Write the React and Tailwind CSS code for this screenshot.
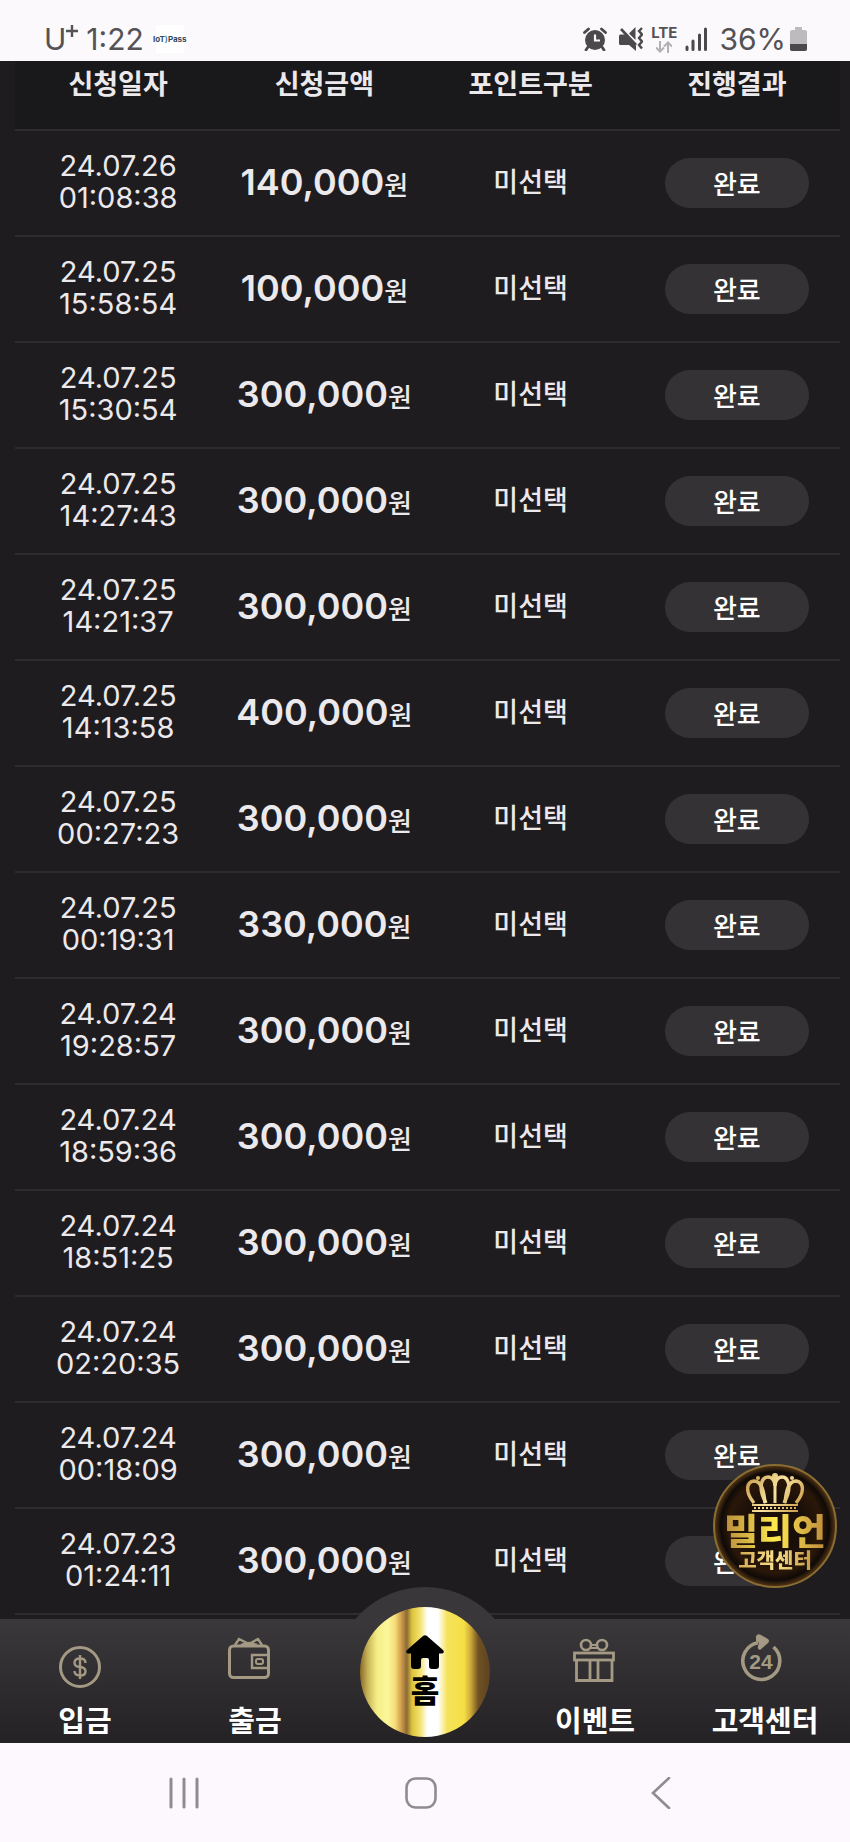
import React from "react";

const rows = [
  { date: "24.07.26", time: "01:08:38", amount: "140,000" },
  { date: "24.07.25", time: "15:58:54", amount: "100,000" },
  { date: "24.07.25", time: "15:30:54", amount: "300,000" },
  { date: "24.07.25", time: "14:27:43", amount: "300,000" },
  { date: "24.07.25", time: "14:21:37", amount: "300,000" },
  { date: "24.07.25", time: "14:13:58", amount: "400,000" },
  { date: "24.07.25", time: "00:27:23", amount: "300,000" },
  { date: "24.07.25", time: "00:19:31", amount: "330,000" },
  { date: "24.07.24", time: "19:28:57", amount: "300,000" },
  { date: "24.07.24", time: "18:59:36", amount: "300,000" },
  { date: "24.07.24", time: "18:51:25", amount: "300,000" },
  { date: "24.07.24", time: "02:20:35", amount: "300,000" },
  { date: "24.07.24", time: "00:18:09", amount: "300,000" },
  { date: "24.07.23", time: "01:24:11", amount: "300,000" },
];

const columns = ["신청일자", "신청금액", "포인트구분", "진행결과"];

function StatusBar() {
  return (
    <header className="flex h-[61px] items-end justify-between bg-[#fbf9fc] pr-[43px] pb-1 pl-11 font-['Inter',sans-serif] text-[30px] leading-9 text-[#545255]">
      <div className="flex items-center">
        <span>U</span>
        <svg className="mb-4 h-3 w-3" viewBox="0 0 12 12" fill="none" stroke="currentColor" strokeWidth="2.4">
          <path d="M6 0v12M0 6h12" />
        </svg>
        <span className="ml-2">1:22</span>
        <span className="ml-3 flex h-7 w-7 items-center justify-center bg-white text-[8px] font-bold text-[#33475a]">
          IoT<span className="text-[#3f86b0]">)</span>Pass
        </span>
      </div>
      <div className="flex items-center">
        <svg className="h-6 w-6" viewBox="0 0 24 24" fill="none" stroke="#4b494c">
          <circle cx="12" cy="13" r="10" fill="#4b494c" stroke="none" />
          <path d="M1.500 5.500 5.500 2M22.500 5.500 18.500 2M5 20l-2 3M19 20l2 3" strokeWidth="2.800" strokeLinecap="round" />
          <path d="M12 7.500v6h5" stroke="#fbf9fc" strokeWidth="2.200" />
        </svg>
        <svg className="ml-3 h-6 w-6" viewBox="0 0 24 24" fill="none">
          <path d="M0 9q0-1.500 1.500-1.500H6L17 19v5l-7-6H1.500Q0 18 0 16.500z" fill="#4b494c" />
          <path d="M10 6.500 16.500 0v13z" fill="#4b494c" />
          <path d="M2 2l15 16" stroke="#4b494c" strokeWidth="2.600" />
          <path d="M23 1l-3 3 3 3.500-3 3.500 3 3.500-3 3.500 3 3.500" stroke="#4b494c" strokeWidth="2.400" />
        </svg>
        <div className="ml-2 flex flex-col items-center">
          <span className="text-[15px] leading-4 font-bold">LTE</span>
          <svg className="h-3 w-4" viewBox="0 0 16 12" fill="none" stroke="#b3b1b4" strokeWidth="2">
            <path d="M4 0v10M0 6.500l4 4 4-4M12 12V2M8 5.500l4-4 4 4" />
          </svg>
        </div>
        <svg className="ml-2 h-6 w-[22px]" viewBox="0 0 22 24" stroke="#4b494c" strokeWidth="3" strokeLinecap="round">
          <path d="M2 20v2.500M8 14v8.500M14.500 8v14.500M20.500 2v20.500" />
        </svg>
        <span className="ml-3">36%</span>
        <svg className="ml-1 h-6 w-[17px]" viewBox="0 0 17 24">
          <path d="M5 0h7v3h3q2 0 2 2v17q0 2-2 2H2q-2 0-2-2V5q0-2 2-2h3z" fill="#bdbbbe" />
          <path d="M0 17h17v5q0 2-2 2H2q-2 0-2-2z" fill="#4b494c" />
        </svg>
      </div>
    </header>
  );
}

function HistoryTable() {
  return (
    <table className="w-full table-fixed border-collapse text-center">
      <thead className="bg-[#19181b]">
        <tr className="border-b-2 border-[#2d2c2f]">
          {columns.map((name) => (
            <th key={name} className="h-[69px] pb-6 text-[27px] leading-8 font-bold">
              {name}
            </th>
          ))}
        </tr>
      </thead>
      <tbody>
        {rows.map((row) => (
          <tr key={row.date + row.time} className="h-[106px] border-b-2 border-[#2d2c2f]">
            <td className="pb-0.5 font-['Inter',sans-serif] text-[29px] leading-8">
              {row.date}
              <br />
              {row.time}
            </td>
            <td className="pb-0.5 whitespace-nowrap">
              <span className="font-['Inter',sans-serif] text-[36px] leading-10 font-semibold">{row.amount}</span>
              <span className="text-[26px] font-medium">원</span>
            </td>
            <td className="pb-1 text-[27px] font-medium">미선택</td>
            <td>
              <span className="mx-auto flex h-[50px] w-36 items-center justify-center rounded-full bg-[#343235] pb-0.5 text-[26px] font-medium text-white">
                완료
              </span>
            </td>
          </tr>
        ))}
      </tbody>
    </table>
  );
}

function SupportBadge() {
  return (
    <a
      href="#support"
      className="absolute right-[13px] bottom-[31px] flex h-[124px] w-[124px] flex-col items-center rounded-full border-2 border-[#8a6d33] bg-[radial-gradient(circle,#1a0f08_35%,#2a1709_55%,#0f0a07_64%,#5b3a16_72%)] pt-[6px]"
    >
      <svg className="h-10 w-[58px]" viewBox="0 0 58 40" fill="none" stroke="url(#crown)">
        <defs>
          <linearGradient id="crown" x1="0" y1="0" x2="58" y2="40" gradientUnits="userSpaceOnUse">
            <stop offset="0" stopColor="#c29540" />
            <stop offset="0.5" stopColor="#f7e3a0" />
            <stop offset="1" stopColor="#c2923a" />
          </linearGradient>
        </defs>
        <path d="M8 31C-1 20 0 10 8 9c8 0 10 11 11 22M50 31c9-11 8-21 0-22-8 0-10 11-11 22" strokeWidth="3.400" />
        <path d="M20 31C11 15 16 5 22 5c5 0 7 5 7 9 0-4 2-9 7-9 6 0 11 10 2 26" strokeWidth="3.400" />
        <path d="M29 6v25" strokeWidth="3" />
        <g fill="url(#crown)" stroke="none">
          <circle cx="29" cy="4" r="3" />
          <circle cx="12" cy="6" r="2" />
          <circle cx="46" cy="6" r="2" />
        </g>
        <path d="M6 33h46M6 39h46" strokeWidth="2" />
        <path d="M8 36h42" strokeWidth="2" strokeDasharray="2 2" />
      </svg>
      <span className="bg-linear-to-r from-[#b88d3c] via-[#ffe94f] to-[#bd8c3c] bg-clip-text text-[37px] leading-9 font-black whitespace-nowrap text-transparent">
        밀리언
      </span>
      <span className="bg-linear-to-r from-[#d5a94c] via-[#f8e08a] to-[#c79a45] bg-clip-text text-[20px] leading-6 font-black whitespace-nowrap text-transparent">
        고객센터
      </span>
    </a>
  );
}

function DepositIcon() {
  return (
    <svg className="h-[52px] w-14 overflow-visible" viewBox="0 0 56 52" fill="none" stroke="#a49a84">
      <circle cx="23" cy="34" r="19.500" strokeWidth="3" />
      <path d="M28.500 30q0-4.500-5.500-4.500T17.500 30q0 3.500 5.500 4t5.500 4.200q0 4.300-5.500 4.300T17.500 38M23 22v24" strokeWidth="2.400" />
    </svg>
  );
}

function WalletIcon() {
  return (
    <svg className="h-[52px] w-14" viewBox="0 0 56 52" fill="none" stroke="#a49a84">
      <rect x="2.500" y="13" width="39" height="31.500" rx="4" strokeWidth="3" />
      <path d="M8 12l4-6 10 5 9-5 4 6M14 12l8-2 8 2" strokeWidth="2.400" />
      <path d="M41 22H25v13h16" strokeWidth="2.400" />
      <rect x="29" y="26" width="7" height="5" rx="2" strokeWidth="2" />
    </svg>
  );
}

function GiftIcon() {
  return (
    <svg className="h-[52px] w-14" viewBox="0 0 56 52" fill="none" stroke="#a49a84">
      <circle cx="19" cy="12" r="5" strokeWidth="2.600" />
      <circle cx="35" cy="12" r="5" strokeWidth="2.600" />
      <path d="M24 12h6M24 15h6" strokeWidth="2" />
      <rect x="7.500" y="20" width="39" height="7" strokeWidth="2.800" />
      <path d="M9.500 27v20.500h35.500V27M23 27v20M31 27v20" strokeWidth="2.800" />
    </svg>
  );
}

function SupportIcon() {
  return (
    <svg className="h-[52px] w-14" viewBox="0 0 56 52">
      <path d="M36.500 14A18.500 18.500 0 1 1 21 9.700" fill="none" stroke="#a49a84" strokeWidth="3.600" />
      <path d="M19 3q2-3 5-1l7 4q2 2 0 4l-8 7q-3-1-2-4l1-3-3-2z" fill="#a49a84" />
      <text x="24" y="36" textAnchor="middle" className="fill-[#a49a84] font-['Liberation_Sans',sans-serif] text-[21px] font-bold">
        24
      </text>
    </svg>
  );
}

function NavItem({ label, href, children }) {
  return (
    <li>
      <a href={href} className="flex flex-col items-center gap-4 pt-[14px] pb-[6px] text-[29px] leading-9 font-bold whitespace-nowrap text-white">
        {children}
        {label}
      </a>
    </li>
  );
}

function BottomNav() {
  return (
    <nav className="relative">
      <div className="absolute -top-8 left-1/2 h-[184px] w-[184px] -translate-x-1/2 rounded-full bg-[#39373a] [clip-path:inset(0_0_120px_0)]" />
      <ul className="relative grid grid-cols-5 bg-linear-to-b from-[#3a383b] to-[#242225]">
        <NavItem label="입금" href="#deposit">
          <DepositIcon />
        </NavItem>
        <NavItem label="출금" href="#withdraw">
          <WalletIcon />
        </NavItem>
        <li className="relative">
          <a
            href="#home"
            className="absolute -top-3 left-1/2 flex h-[130px] w-[130px] -translate-x-1/2 flex-col items-center rounded-full bg-[linear-gradient(90deg,#86692a_0%,#c9b458_6%,#f4ee86_13%,#fbf89a_21%,#f5dd78_27%,#d9a653_31%,#8b6a33_36%,#dcc33e_40%,#f3e26a_46%,#ffffff_52%,#ffffff_60%,#f6e35c_67%,#f5df45_80%,#cfaa3a_85%,#705123_91%,#5c4220_100%)] pt-7 text-[31px] leading-10 font-black text-black"
          >
            <svg className="h-[34px] w-[38px]" viewBox="0 0 38 34">
              <path d="M17 1q2-1.500 4 0l16 14q2 3-1 3.500h-3V31q0 3-3 3h-4q-3 0-3-3v-6q0-2-2-2h-4q-2 0-2 2v6q0 3-3 3H8q-3 0-3-3V18.500H2q-3-.5-1-3.500z" />
            </svg>
            <span>홈</span>
          </a>
        </li>
        <NavItem label="이벤트" href="#event">
          <GiftIcon />
        </NavItem>
        <NavItem label="고객센터" href="#support">
          <SupportIcon />
        </NavItem>
      </ul>
    </nav>
  );
}

function SystemNav() {
  return (
    <footer className="flex h-[99px] items-center justify-between bg-[#fdf8fe] pr-44 pl-[168px]">
      <button aria-label="Recents">
        <svg className="h-8 w-8" viewBox="0 0 32 32" stroke="#8f8b90" strokeWidth="3" strokeLinecap="round">
          <path d="M3 2v28M16 2v28M29 2v28" />
        </svg>
      </button>
      <button aria-label="Home">
        <svg className="h-8 w-8" viewBox="0 0 32 32" fill="none" stroke="#8f8b90" strokeWidth="2.600">
          <rect x="1.500" y="1.500" width="29" height="29" rx="9" />
        </svg>
      </button>
      <button aria-label="Back">
        <svg className="h-8 w-8" viewBox="0 0 32 32" fill="none" stroke="#8f8b90" strokeWidth="2.600" strokeLinecap="round">
          <path d="M27 1 11 16l16 15" />
        </svg>
      </button>
    </footer>
  );
}

function App() {
  return (
    <div className="flex min-h-screen flex-col bg-[#1e1c1f] font-['Noto_Sans_CJK_KR',sans-serif] text-[#ece9ed]">
      <StatusBar />
      <main className="relative flex-1 pr-[10px] pb-1 pl-[15px]">
        <HistoryTable />
        <SupportBadge />
      </main>
      <BottomNav />
      <SystemNav />
    </div>
  );
}

export default App;
